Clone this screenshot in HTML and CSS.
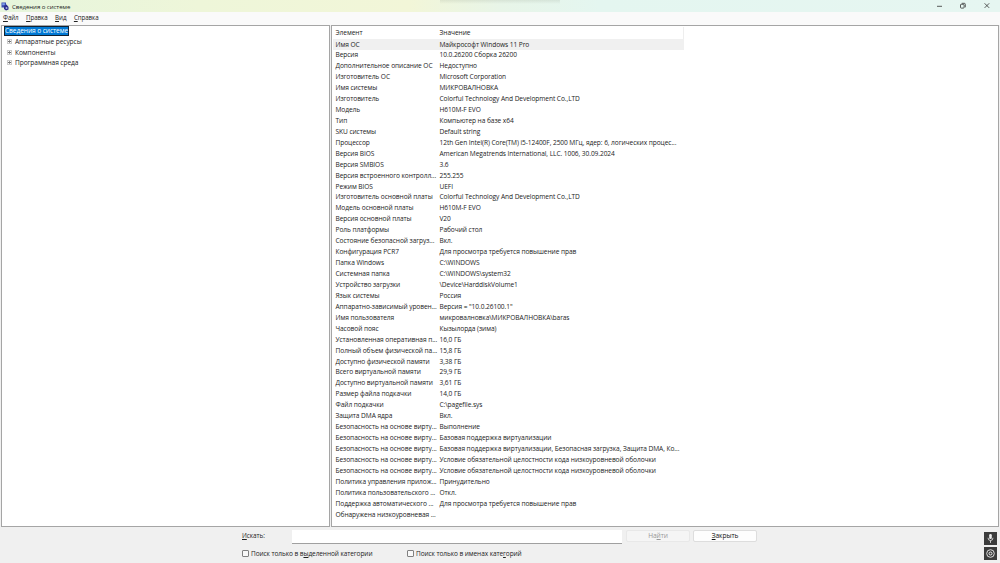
FILE: index.html
```html
<!DOCTYPE html>
<html lang="ru">
<head>
    <meta charset="UTF-8">
    <title>Сведения о системе</title>
    <link rel="stylesheet" href="styles.css">
</head>
<body>
    <header class="titlebar">
        <svg class="app-icon" viewBox="0 0 8 9">
            <rect x="0.5" y="0.5" width="4.5" height="5" fill="#3b4fb0"/>
            <rect x="1.2" y="1.2" width="2.6" height="2" fill="#7fa0e8"/>
            <path d="M3 4l2.5-1.5L7.5 5v2.5L5 8.5 3 7z" fill="#2b2f8c"/>
            <circle cx="5.5" cy="6" r="1" fill="#a9b4e6"/>
        </svg>
        <span class="title">Сведения о системе</span>
        <svg class="win-buttons" viewBox="0 0 60 12" fill="none" stroke="#333" stroke-width="0.8">
            <path d="M2 6.3h5"/>
            <rect x="25.5" y="4.3" width="3.6" height="3.8" rx="0.7"/>
            <path d="M26.7 3.3h2.6q1 0 1 1v3"/>
            <path d="M49.6 3.3l4.6 4.6M54.2 3.3l-4.6 4.6"/>
        </svg>
    </header>
    <nav class="menu">
        <a><u>Ф</u>айл</a>
        <a><u>П</u>равка</a>
        <a><u>В</u>ид</a>
        <a><u>С</u>правка</a>
    </nav>
    <main class="panes">
        <div class="tree">
            <div class="root"><span>Сведения о системе</span></div>
            <div class="node"><i class="plus"></i><span>Аппаратные ресурсы</span></div>
            <div class="node"><i class="plus"></i><span>Компоненты</span></div>
            <div class="node"><i class="plus"></i><span>Программная среда</span></div>
        </div>
        <div class="list">
            <div class="row head"><span>Элемент</span><span>Значение</span></div>
            <div class="row selected"><span>Имя ОС</span><span>Майкрософт Windows 11 Pro</span></div>
            <div class="row"><span>Версия</span><span>10.0.26200 Сборка 26200</span></div>
            <div class="row"><span>Дополнительное описание ОС</span><span>Недоступно</span></div>
            <div class="row"><span>Изготовитель ОС</span><span>Microsoft Corporation</span></div>
            <div class="row"><span>Имя системы</span><span>МИКРОВАЛНОВКА</span></div>
            <div class="row"><span>Изготовитель</span><span>Colorful Technology And Development Co.,LTD</span></div>
            <div class="row"><span>Модель</span><span>H610M-F EVO</span></div>
            <div class="row"><span>Тип</span><span>Компьютер на базе x64</span></div>
            <div class="row"><span>SKU системы</span><span>Default string</span></div>
            <div class="row"><span>Процессор</span><span>12th Gen Intel(R) Core(TM) i5-12400F, 2500 МГц, ядер: 6, логических процес...</span></div>
            <div class="row"><span>Версия BIOS</span><span>American Megatrends International, LLC. 1006, 30.09.2024</span></div>
            <div class="row"><span>Версия SMBIOS</span><span>3.6</span></div>
            <div class="row"><span>Версия встроенного контролл...</span><span>255.255</span></div>
            <div class="row"><span>Режим BIOS</span><span>UEFI</span></div>
            <div class="row"><span>Изготовитель основной платы</span><span>Colorful Technology And Development Co.,LTD</span></div>
            <div class="row"><span>Модель основной платы</span><span>H610M-F EVO</span></div>
            <div class="row"><span>Версия основной платы</span><span>V20</span></div>
            <div class="row"><span>Роль платформы</span><span>Рабочий стол</span></div>
            <div class="row"><span>Состояние безопасной загруз...</span><span>Вкл.</span></div>
            <div class="row"><span>Конфигурация PCR7</span><span>Для просмотра требуется повышение прав</span></div>
            <div class="row"><span>Папка Windows</span><span>C:\WINDOWS</span></div>
            <div class="row"><span>Системная папка</span><span>C:\WINDOWS\system32</span></div>
            <div class="row"><span>Устройство загрузки</span><span>\Device\HarddiskVolume1</span></div>
            <div class="row"><span>Язык системы</span><span>Россия</span></div>
            <div class="row"><span>Аппаратно-зависимый уровен...</span><span>Версия = "10.0.26100.1"</span></div>
            <div class="row"><span>Имя пользователя</span><span>микровалновка\МИКРОВАЛНОВКА\baras</span></div>
            <div class="row"><span>Часовой пояс</span><span>Кызылорда (зима)</span></div>
            <div class="row"><span>Установленная оперативная п...</span><span>16,0 ГБ</span></div>
            <div class="row"><span>Полный объем физической па...</span><span>15,8 ГБ</span></div>
            <div class="row"><span>Доступно физической памяти</span><span>3,38 ГБ</span></div>
            <div class="row"><span>Всего виртуальной памяти</span><span>29,9 ГБ</span></div>
            <div class="row"><span>Доступно виртуальной памяти</span><span>3,61 ГБ</span></div>
            <div class="row"><span>Размер файла подкачки</span><span>14,0 ГБ</span></div>
            <div class="row"><span>Файл подкачки</span><span>C:\pagefile.sys</span></div>
            <div class="row"><span>Защита DMA ядра</span><span>Вкл.</span></div>
            <div class="row"><span>Безопасность на основе вирту...</span><span>Выполнение</span></div>
            <div class="row"><span>Безопасность на основе вирту...</span><span>Базовая поддержка виртуализации</span></div>
            <div class="row"><span>Безопасность на основе вирту...</span><span>Базовая поддержка виртуализации, Безопасная загрузка, Защита DMA, Ко...</span></div>
            <div class="row"><span>Безопасность на основе вирту...</span><span>Условие обязательной целостности кода низкоуровневой оболочки</span></div>
            <div class="row"><span>Безопасность на основе вирту...</span><span>Условие обязательной целостности кода низкоуровневой оболочки</span></div>
            <div class="row"><span>Политика управления прилож...</span><span>Принудительно</span></div>
            <div class="row"><span>Политика пользовательского ...</span><span>Откл.</span></div>
            <div class="row"><span>Поддержка автоматического ...</span><span>Для просмотра требуется повышение прав</span></div>
            <div class="row"><span>Обнаружена низкоуровневая ...</span><span></span></div>
        </div>
    </main>
    <footer class="search">
        <div class="find-row">
            <label class="find-label"><u>И</u>скать:</label>
            <input class="find-input" type="text">
            <button class="btn disabled">На<u>й</u>ти</button>
            <button class="btn"><u>З</u>акрыть</button>
        </div>
        <div class="check-row">
            <label class="check"><i class="box"></i><span>Поиск только в в<u>ы</u>деленной категории</span></label>
            <label class="check"><i class="box"></i><span>Поиск только в именах кате<u>г</u>орий</span></label>
        </div>
        <div class="overlay">
            <svg viewBox="0 0 13 13">
                <rect width="13" height="13" fill="#3c3c3c"/>
                <rect x="5.2" y="2" width="2.6" height="5" rx="1.3" fill="#eee"/>
                <path d="M4 5.8q0 2.7 2.5 2.7T9 5.8M6.5 8.5v2.4" fill="none" stroke="#ddd" stroke-width="0.9"/>
            </svg>
            <svg viewBox="0 0 13 13">
                <rect width="13" height="13" fill="#3c3c3c"/>
                <circle cx="6.5" cy="6.5" r="3.8" fill="none" stroke="#ddd"/>
                <circle cx="6.5" cy="6.5" r="1.5" fill="none" stroke="#eee"/>
            </svg>
        </div>
    </footer>
</body>
</html>
```
FILE: styles.css
```css
* {
    box-sizing: border-box;
}
body {
    margin: 0;
    width: 1000px;
    height: 563px;
    overflow: hidden;
    display: flex;
    flex-direction: column;
    background: #f0f0f0;
    font-family: "Open Sans", "Noto Sans", sans-serif;
    font-size: 6.6px;
    letter-spacing: -0.07px;
    color: #222;
    white-space: nowrap;
}
u {
    text-decoration-thickness: 0.6px;
    text-underline-offset: 1px;
}
.titlebar {
    height: 12px;
    display: flex;
    align-items: center;
    padding-left: 1px;
    background:
        linear-gradient(to bottom, rgba(120, 130, 110, 0.15), transparent) 440px 0 / 120px 4px no-repeat,
        linear-gradient(to right, #e6f5dc, #eef6d9 20%, #f2f6d8 41%, #e8f5e8 50%, #e4f6f0 60%, #e6f6f1);
}
.app-icon {
    width: 8px;
    height: 9px;
}
.title {
    margin-left: 3px;
    flex: 1;
    font-size: 6.1px;
    padding-top: 1px;
}
.win-buttons {
    width: 60px;
    height: 12px;
    margin-right: 5px;
}
.menu {
    height: 13px;
    display: flex;
    align-items: center;
    gap: 7.5px;
    padding: 0 0 2px 3px;
    background: #fafafa;
    font-size: 6.2px;
}
.panes {
    height: 502px;
    display: flex;
    gap: 1px;
    padding: 0 1px;
}
.tree, .list {
    background: #fff;
    border: 1px solid #a5a5a5;
}
.tree {
    width: 329px;
    padding: 0 2px;
}
.root {
    height: 10.4px;
    line-height: 10px;
}
.root span {
    display: inline-block;
    height: 10px;
    padding: 0 1px;
    background: #0078d4;
    color: #fff;
    outline: 1px solid #123;
    outline-offset: -1px;
}
.node {
    height: 10.5px;
    display: flex;
    align-items: center;
    gap: 3px;
    padding-left: 3px;
}
.plus {
    width: 5px;
    height: 5px;
    border: 0.5px solid #ccc;
    background: linear-gradient(#777, #777) center / 3px 1px no-repeat, linear-gradient(#999, #999) center / 1px 3px no-repeat;
}
.list {
    flex: 1;
    padding: 1px 0 0 1px;
}
.row {
    display: grid;
    grid-template-columns: 104px 246px;
    width: 351px;
    height: 10.94px;
    line-height: 10.94px;
    padding-left: 2.5px;
}
.head {
    height: 12px;
    line-height: 12px;
    border-right: 1px solid #eee;
}
/* row content sits slightly below the header line */
.selected {
    background: #f0f0f0;
    height: 11.3px;
    line-height: 11.6px;
}
.search {
    flex: 1;
    position: relative;
    padding: 3px 0 0 242px;
}
.find-row {
    display: flex;
    height: 15px;
}
.find-label {
    width: 50px;
    line-height: 12px;
    font-size: 6.4px;
}
.find-input {
    width: 330px;
    height: 14px;
    padding: 0;
    border: 0;
    border-bottom: 1px solid #a0a0a0;
    background: #fff;
    margin-right: 4px;
}
.btn {
    width: 64px;
    height: 12px;
    padding: 0;
    margin-right: 3px;
    border: 1px solid #ddd;
    border-radius: 2px;
    background: #fdfdfd;
    font: inherit;
    letter-spacing: inherit;
    line-height: 10px;
    color: #111;
}
.disabled {
    background: #f5f5f5;
    border-color: #e8e8e8;
    color: #999;
}
.check-row {
    display: flex;
    margin-top: 3px;
    font-size: 6.5px;
}
.check {
    display: flex;
    align-items: center;
    width: 165px;
    height: 10px;
    gap: 2px;
}
.box {
    width: 7px;
    height: 7px;
    border: 1px solid #808080;
    border-radius: 1px;
    background: #f8f8f8;
}
.overlay {
    position: absolute;
    right: 3px;
    top: 5px;
    display: flex;
    flex-direction: column;
    gap: 2px;
}
.overlay svg {
    width: 13px;
    height: 13px;
}
```
